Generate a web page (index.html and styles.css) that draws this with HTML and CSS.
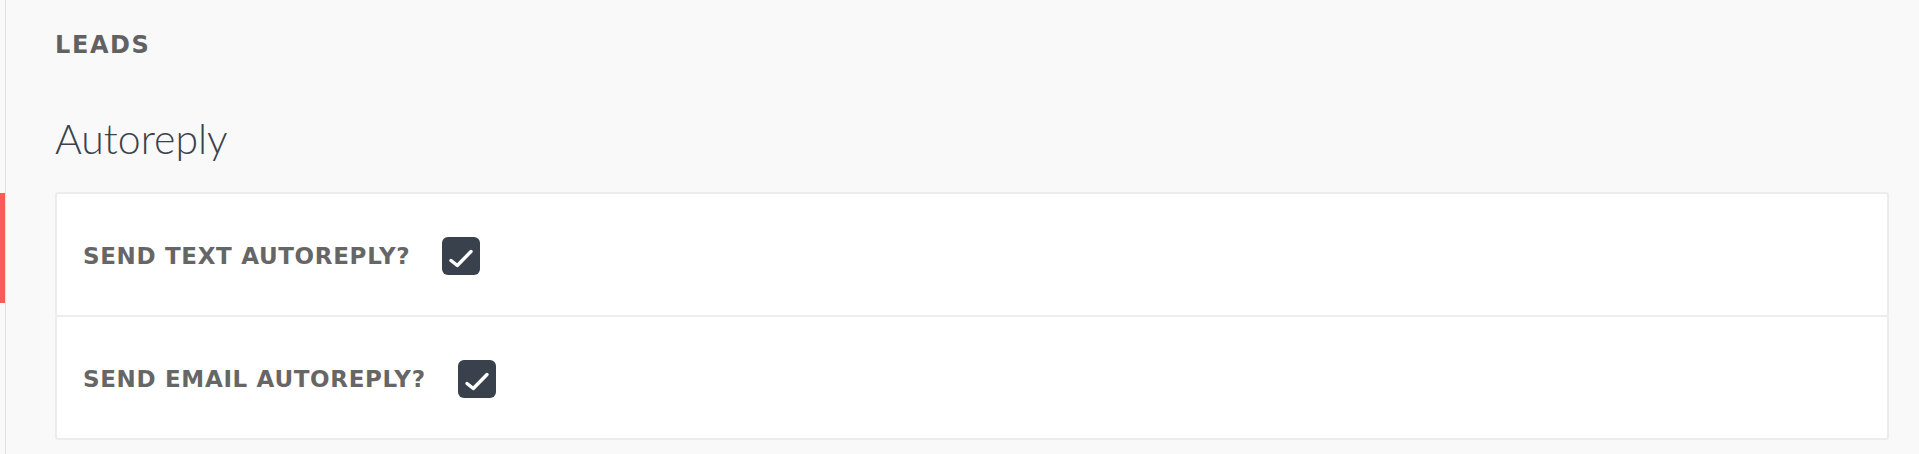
FILE: index.html
```html
<!DOCTYPE html>
<html lang="en">
<head>
<meta charset="utf-8">
<title>Leads - Autoreply</title>
<link rel="stylesheet" href="styles.css">
</head>
<body>
<div class="layout">
  <div class="rail"><div class="rail-marker"></div></div>
  <main class="content">
    <div class="section-title">LEADS</div>
    <h1 class="heading">Autoreply</h1>
    <div class="card">
      <div class="row">
        <span class="label">SEND TEXT AUTOREPLY?</span>
        <span class="checkbox"><svg viewBox="0 0 38 38" width="38" height="38"><path d="M9 23.5 L15.3 28.5 L29 14.5" fill="none" stroke="#fff" stroke-width="3.4" stroke-linecap="round" stroke-linejoin="round"/></svg></span>
      </div>
      <div class="row">
        <span class="label">SEND EMAIL AUTOREPLY?</span>
        <span class="checkbox"><svg viewBox="0 0 38 38" width="38" height="38"><path d="M9 23.5 L15.3 28.5 L29 14.5" fill="none" stroke="#fff" stroke-width="3.4" stroke-linecap="round" stroke-linejoin="round"/></svg></span>
      </div>
    </div>
  </main>
</div>
</body>
</html>
```
FILE: styles.css
```css
html, body {
  margin: 0;
  padding: 0;
  background: #f9f9f9;
  height: 100%;
}
.layout {
  display: flex;
  min-height: 454px;
}
.rail {
  width: 5px;
  border-right: 1px solid #e2e2e2;
  flex: none;
}
.rail-marker {
  margin-top: 193px;
  height: 110px;
  background: #f65c5b;
}
.content {
  flex: 1;
  padding: 0 30px 0 49px;
}
.section-title {
  font-family: "DejaVu Sans", sans-serif;
  font-weight: bold;
  font-size: 24px;
  line-height: 28px;
  color: #616161;
  margin-top: 31px;
  letter-spacing: 1.6px;
}
.heading {
  font-family: Lato, sans-serif;
  font-weight: 300;
  font-size: 41px;
  line-height: 50px;
  color: #3a434d;
  margin: 55px 0 0 0;
}
.card {
  margin-top: 28px;
}
.row {
  display: flex;
  align-items: center;
  gap: 32px;
  height: 119px;
  padding: 2px 0 0 26px;
  background: #fff;
  border: 2px solid #ececec;
  border-radius: 3px;
}
.row + .row {
  margin-top: -2px;
}
.label {
  font-family: "DejaVu Sans", sans-serif;
  font-weight: bold;
  font-size: 23px;
  color: #666666;
  letter-spacing: 0.67px;
}
.checkbox {
  width: 38px;
  height: 38px;
  border-radius: 6px;
  background: #39424c;
  display: block;
  flex: none;
}
.checkbox svg {
  display: block;
}
```
